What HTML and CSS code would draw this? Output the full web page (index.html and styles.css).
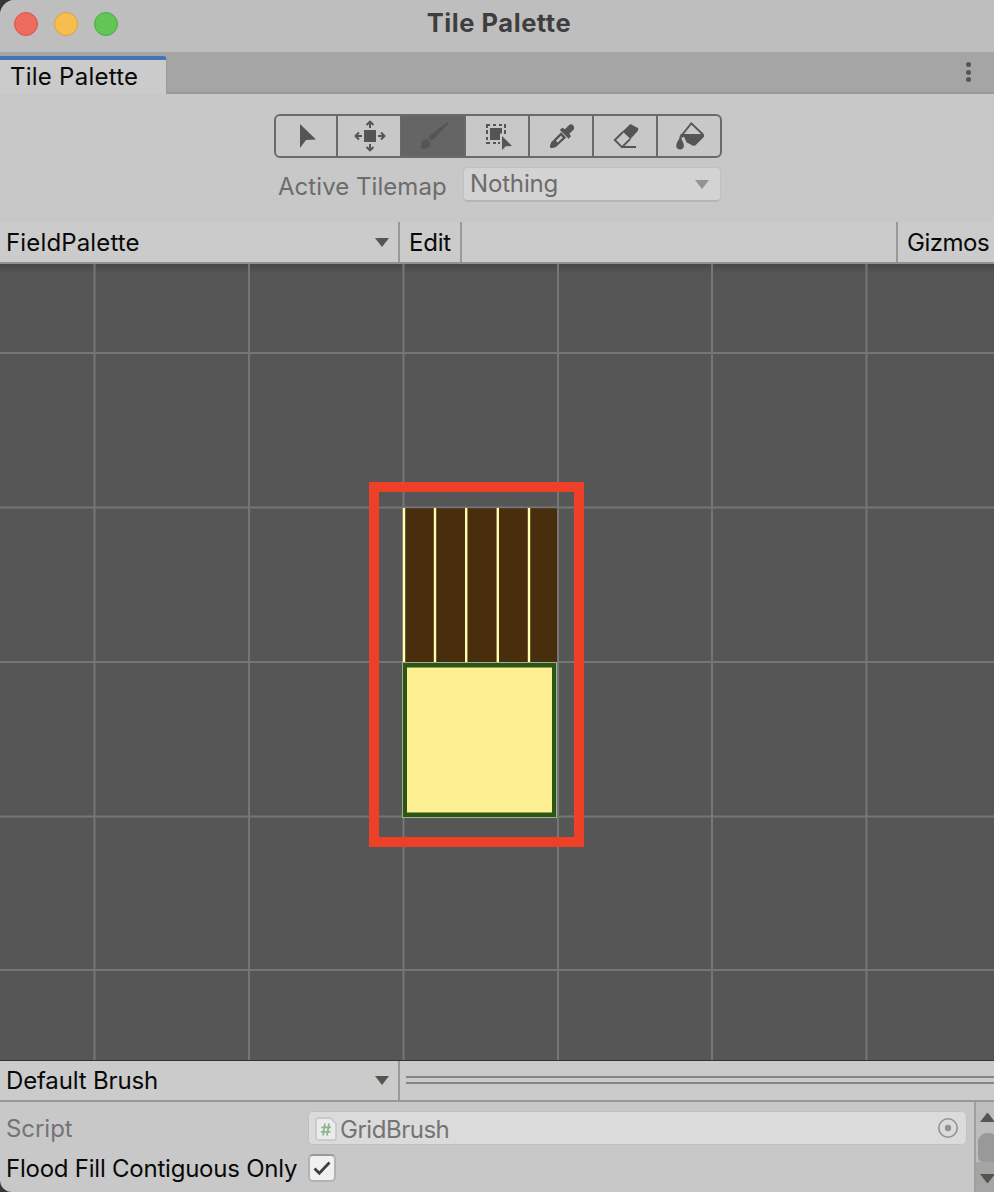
FILE: index.html
```
<!DOCTYPE html>
<html lang="en">
<head>
    <meta charset="UTF-8">
    <meta name="viewport" content="width=device-width, initial-scale=1.0">
    <title>Tile Palette</title>
    <link rel="stylesheet" href="styles.css">
</head>
<body>
    <div class="window">
        <header class="title-bar">
            <div class="lights">
                <span class="light close"></span>
                <span class="light minimize"></span>
                <span class="light maximize"></span>
            </div>
            <h1>Tile Palette</h1>
        </header>

        <div class="tab-bar">
            <div class="tab"><span>Tile Palette</span></div>
            <div class="dots"><i></i><i></i><i></i></div>
        </div>

        <div class="tools-section">
            <div class="tools">
                <button class="tool">
                    <svg viewBox="0 0 62 40"><path d="M24 8L40 23.5L30 24L24 32Z"/></svg>
                </button>
                <button class="tool">
                    <svg viewBox="0 0 62 40">
                        <rect x="26" y="14" width="12" height="12"/>
                        <path class="line" d="M32 12V6M28.5 9L32 5.7L35.5 9M32 28V34M28.5 31L32 34.3L35.5 31M24 20H18M21 16.5L17.5 20L21 23.5M40 20H46M43 16.5L46.5 20L43 23.5"/>
                    </svg>
                </button>
                <button class="tool active">
                    <svg viewBox="0 0 62 40">
                        <path d="M45 6.2Q47.2 6 46.2 8L33 22L29.5 24.5L26.5 21.5L29 18.5Z"/>
                        <path d="M18.2 32Q19.2 30.5 19.3 28.2A4.5 4.5 0 1 1 26.5 31.5Q23.5 34 18.2 32Z"/>
                    </svg>
                </button>
                <button class="tool">
                    <svg viewBox="0 0 62 40">
                        <path class="line" d="M21 12V9H24M27 9H30M33 9H36M38 9H39V12M39 14V18M21 14V18M21 21V24M21 26V27H24M27 27H30M32 27H34"/>
                        <path d="M24 12H36V17.5H34V24H24Z"/>
                        <path d="M36 20L46 30L39.8 30.2L36 34Z"/>
                    </svg>
                </button>
                <button class="tool">
                    <svg viewBox="0 0 62 40">
                        <path d="M38 10Q41 7 43.2 9.4Q45.5 12 42.5 14.8L39.4 17.8L41 20.3L38.7 22.7L29.8 14L32.3 11.8L35 13.3Z"/>
                        <path fill-rule="evenodd" d="M31 16.3L36.2 21.5L26 31Q23 32 21.5 32.2Q19 31.5 20.4 28.5L21.2 26.2ZM31 19.8L26 24.8L27.7 26.5L32.7 21.5Z"/>
                    </svg>
                </button>
                <button class="tool">
                    <svg viewBox="0 0 62 40">
                        <path d="M36.4 8L44.3 12.2L43.8 15L36.5 23L28.5 15.5Z"/>
                        <path class="thin" d="M29 16L20.8 24L28 31.2L36.3 22.8M27.5 31H42"/>
                    </svg>
                </button>
                <button class="tool">
                    <svg viewBox="0 0 62 40">
                        <path class="thin" d="M24 19L33.3 7.3L45 18.5"/>
                        <path d="M22.5 18H45.5Q46.8 19.5 45.8 21L37.6 29.2Q36 30.4 34 29.2L28.5 26.2L26 20.8L22 22.5Z"/>
                        <path d="M22 19L24.7 25.5Q26.8 30 25.3 32Q22 35 18.8 32Q17.3 29.5 19.5 25.5Q21.5 23.5 22 19Z"/>
                    </svg>
                </button>
            </div>
            <div class="tilemap-row">
                <label>Active Tilemap</label>
                <div class="select"><span>Nothing</span><i class="arrow"></i></div>
            </div>
        </div>

        <div class="toolbar">
            <div class="dropdown"><span>FieldPalette</span><i class="arrow"></i></div>
            <div class="edit"><span>Edit</span></div>
            <div class="gizmos"><span>Gizmos</span></div>
        </div>

        <!-- Palette grid, one cell is about 154px -->
        <svg class="palette" viewBox="0 264 994 796">
            <path class="grid" d="M94.5 264V1060M249 264V1060M403.5 264V1060M558 264V1060M712 264V1060M866.5 264V1060M0 353H994M0 507.5H994M0 662H994M0 816.5H994M0 970H994"/>
            <rect class="soil" x="403" y="508.3" width="154" height="154"/>
            <path class="furrow" d="M404 508V662.5M435 508V662.5M466.2 508V662.5M497.8 508V662.5M529 508V662.5"/>
            <rect class="edge" x="402.5" y="662.5" width="154" height="155"/>
            <rect class="grass" x="403" y="663" width="153" height="154"/>
            <rect class="sand" x="407" y="667.5" width="145" height="145"/>
            <rect class="marker" x="374" y="487" width="205" height="355"/>
        </svg>

        <div class="brush-bar">
            <div class="dropdown"><span>Default Brush</span><i class="arrow"></i></div>
            <div class="drag-handle"></div>
        </div>

        <div class="inspector">
            <div class="fields">
                <div class="field disabled">
                    <label>Script</label>
                    <div class="object-field">
                        <svg class="script-icon" viewBox="0 0 22 24">
                            <path class="paper" d="M3 1H15.5L21 6.5V21Q21 23 19 23H3Q1 23 1 21V3Q1 1 3 1Z"/>
                            <path class="hash" d="M10 6.5L8 18.5M14 6.5L12 18.5M6.3 10.3H16M5.8 14.8H15.5"/>
                        </svg>
                        <span>GridBrush</span>
                        <svg class="picker" viewBox="0 0 20 20"><circle class="ring" cx="10" cy="10" r="9.2"/><circle cx="10" cy="10" r="3.2"/></svg>
                    </div>
                </div>
                <div class="field">
                    <label>Flood Fill Contiguous Only</label>
                    <div class="checkbox"><svg viewBox="0 0 24 24"><path d="M4.5 12.5L9.3 17.3L19.5 6.5"/></svg></div>
                </div>
            </div>
            <div class="scrollbar">
                <i class="arrow up"></i>
                <div class="thumb"></div>
                <div class="scroll-end"><i class="arrow"></i></div>
            </div>
        </div>
    </div>
</body>
</html>
```

FILE: styles.css
```
* {
    box-sizing: border-box;
}
body {
    margin: 0;
    background-color: #39363a;
    font-family: Inter, 'Liberation Sans', sans-serif;
    font-size: 24px;
    line-height: 30px;
    color: #090909;
    overflow: hidden;
}
.window {
    width: 994px;
    height: 1192px;
    display: flex;
    flex-direction: column;
    background-color: #c8c8c8;
    border-radius: 15px 0 0 12px;
    overflow: hidden;
}
span,
label {
    white-space: nowrap;
}
.title-bar {
    height: 52px;
    flex: none;
    display: grid;
    grid-template-columns: 1fr auto 1fr;
    padding: 0 0 0 14px;
    background-color: #bebebe;
}
h1 {
    margin: 8px 0 0;
    padding-right: 10px;
    font-size: 25.5px;
    line-height: 30px;
    font-weight: 700;
    letter-spacing: 0.55px;
    color: #3e3e3e;
}
.lights {
    display: flex;
    gap: 16px;
    padding-top: 12px;
}
.light {
    width: 24px;
    height: 24px;
    border-radius: 50%;
    border: 1px solid;
}
.close { background-color: #ed6b5f; border-color: #d95549; }
.minimize { background-color: #f5be4f; border-color: #d9a23e; }
.maximize { background-color: #62c655; border-color: #4ba93f; }
.tab-bar {
    height: 42px;
    flex: none;
    display: flex;
    justify-content: space-between;
    padding-top: 4px;
    background-color: #a5a5a5;
    box-shadow: inset 0 -2px #999;
}
.tab {
    width: 167px;
    padding: 2px 0 0 10px;
    background-color: #cbcbcb;
    border-top: 4px solid #4772b3;
    border-right: 1px solid #999;
    border-radius: 0 4px 0 0;
    letter-spacing: 0.25px;
}
.dots {
    display: flex;
    flex-direction: column;
    gap: 2.5px;
    padding: 6px 23.5px 0 0;
}
.dots i {
    width: 5px;
    height: 5px;
    border-radius: 50%;
    background-color: #555;
}
.tools-section {
    height: 128px;
    flex: none;
    padding: 20px 0 0 274px;
}
.tools {
    display: flex;
    width: 448px;
    height: 44px;
    border: 2px solid #6a6a6a;
    border-radius: 6px;
    overflow: hidden;
}
.tool {
    width: 64px;
    padding: 0;
    border: 0;
    border-right: 2px solid #6a6a6a;
    background: none;
}
.tool:first-child,
.tool:last-child {
    width: 62px;
}
.tool:first-child svg {
    margin-right: -2px;
}
.tool:last-child {
    border-right: 0;
}
.tool svg {
    display: block;
    width: 62px;
    height: 40px;
    fill: #555;
}
.tool .line,
.tool .thin {
    fill: none;
    stroke: #555;
    stroke-width: 2;
}
.tool .thin {
    stroke-width: 1.9;
}
.tool.active {
    background-color: #656565;
    box-shadow: -1px 0 #656565;
}
.tilemap-row {
    display: flex;
    padding: 9px 0 0 4px;
    color: #6c6c6c;
}
.tilemap-row label {
    width: 185px;
    padding-top: 5px;
    letter-spacing: 0.05px;
}
.select {
    width: 258px;
    height: 35px;
    display: flex;
    align-items: center;
    justify-content: space-between;
    padding: 0 11px 1px 6px;
    border: 1px solid #c0c0c0;
    border-bottom: 2px solid #b5b5b5;
    border-radius: 5px;
    background-color: #d3d3d3;
    letter-spacing: -0.15px;
}
.select .arrow {
    margin-top: 2px;
    border-top-color: #949491;
}
.arrow {
    border: 7.5px solid transparent;
    border-top: 9px solid #56564e;
    border-bottom: 0;
}
.arrow.up {
    border-top: 0;
    border-bottom: 9px solid #56564e;
}
.toolbar {
    height: 42px;
    flex: none;
    display: flex;
    background-color: #cbcbcb;
    border-bottom: 2px solid #929292;
}
.dropdown {
    width: 400px;
    display: flex;
    align-items: center;
    justify-content: space-between;
    padding: 0 9px 0 6px;
    border-right: 2px solid #999;
}
.toolbar .dropdown span {
    padding-top: 2px;
    letter-spacing: 0.15px;
}
.brush-bar .dropdown span {
    letter-spacing: -0.15px;
}
.edit {
    width: 62px;
    padding: 6px 0 0 9px;
    border-right: 2px solid #999;
    letter-spacing: -0.2px;
}
.gizmos {
    width: 98px;
    margin-left: auto;
    padding: 6px 0 0 9px;
    border-left: 2px solid #999;
    letter-spacing: -0.5px;
}
.palette {
    display: block;
    width: 994px;
    height: 796px;
    flex: none;
    background: linear-gradient(#484848, #565656 10px);
}
.grid {
    stroke: #767676;
    stroke-width: 2;
}
.soil { fill: #482e0d; }
.furrow {
    stroke: #ffffb0;
    stroke-width: 2.4;
}
.edge { fill: none; stroke: #a0af91; }
.grass { fill: #2b5615; }
.sand { fill: #fef092; }
.marker {
    fill: none;
    stroke: #ed4026;
    stroke-width: 10;
}
.brush-bar {
    height: 42px;
    flex: none;
    display: flex;
    background-color: #cbcbcb;
    border-top: 1px solid #343434;
    border-bottom: 2px solid #999;
}
.drag-handle {
    flex: 1;
    height: 8px;
    margin: 15px 0 0 6px;
    border-top: 2px solid #858585;
    border-bottom: 2px solid #858585;
}
.inspector {
    flex: 1;
    display: flex;
}
.fields {
    flex: 1;
    padding: 9px 7px 0 6px;
}
.field {
    display: flex;
    height: 34px;
    letter-spacing: -0.23px;
}
.field label {
    width: 302px;
}
.field.disabled {
    color: #747474;
    margin-bottom: 9px;
    letter-spacing: -0.05px;
}
.field.disabled label {
    padding-top: 3px;
}
.object-field {
    flex: 1;
    display: flex;
    align-items: center;
    padding: 2px 8px 0 6px;
    border: 1px solid #c1c1c1;
    border-radius: 5px;
    background-color: #dbdbdb;
}
.object-field span {
    padding-top: 2px;
    letter-spacing: -0.48px;
}
.script-icon {
    width: 22px;
    height: 24px;
    margin: -1px 3px 0 0;
}
.paper { fill: #ebebeb; stroke: #c5c5c5; stroke-width: 1.5; }
.hash { fill: none; stroke: #8fb48f; stroke-width: 1.7; }
.picker {
    width: 20px;
    height: 20px;
    margin: -3px 0 0 auto;
    fill: #929292;
}
.ring {
    fill: none;
    stroke: #929292;
    stroke-width: 1.6;
}
.checkbox {
    width: 28px;
    height: 28px;
    border: 2px solid #b2b2b2;
    border-top-color: #999;
    border-radius: 5px;
    background-color: #f0f0f0;
}
.checkbox svg {
    display: block;
    width: 24px;
    height: 24px;
    fill: none;
    stroke: #3f3f3f;
    stroke-width: 2.8;
}
.scrollbar {
    width: 20px;
    display: flex;
    flex-direction: column;
    padding-top: 11px;
    border-left: 2px solid #a0a0a0;
    background-color: #bdbdbd;
    overflow: hidden;
}
.scrollbar .arrow {
    width: 15px;
    margin-left: 4px;
    flex: none;
}
.thumb {
    width: 20px;
    height: 29px;
    margin: 11px 0 0 2px;
    flex: none;
    border-radius: 9px 9px 5px 5px;
    background-color: #999;
}
.scroll-end {
    display: flex;
    flex: 1;
    align-items: flex-start;
    padding-top: 12px;
    background-color: #a5a5a5;
}
```
